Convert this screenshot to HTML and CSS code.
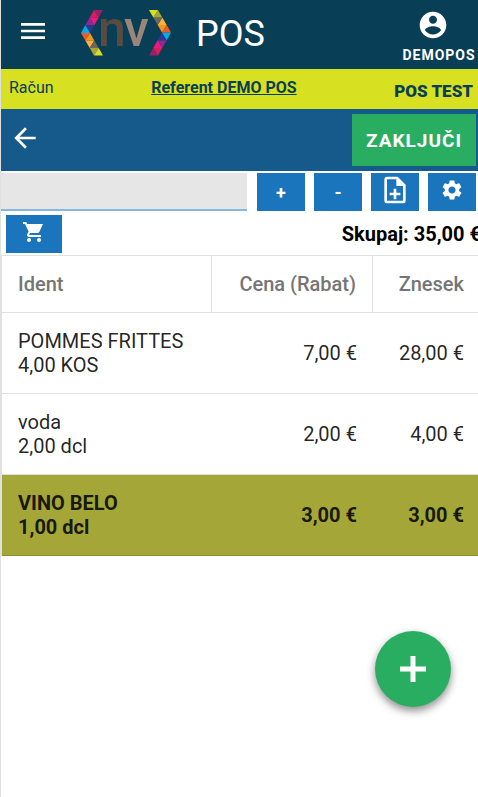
FILE: index.html
```html
<!DOCTYPE html>
<html lang="sl">
<head>
    <meta charset="UTF-8">
    <meta name="viewport" content="width=device-width, initial-scale=1.0">
    <title>POS</title>
    <link rel="stylesheet" href="styles.css">
</head>
<body>

    <header class="app-bar">
        <button type="button" class="menu" aria-label="Meni">
            <svg width="32" height="32" viewBox="0 0 24 24" fill="currentColor"><path d="M3 18h18v-2H3v2zm0-5h18v-2H3v2zm0-7v2h18V6H3z"/></svg>
        </button>
        <svg class="logo" width="90" height="46" viewBox="0 0 90 46" role="img" aria-label="nv">
            <g id="chevron">
                <path fill="#9e1f63" d="M13 0h9l-4.300 7.600z"/>
                <path fill="#da1c5c" d="M13 0l4.700 7.600h-9z"/>
                <path fill="#ec1a80" d="M8.700 7.600h9l-4.400 7.700z"/>
                <path fill="#92278f" d="M8.700 7.600l4.600 7.700h-9z"/>
                <path fill="#2b3990" d="M4.300 15.300h9L9 23z"/>
                <path fill="#00aeef" d="M4.300 15.300L9 23H0z"/>
                <path fill="#f15a29" d="M0 23h9l-4.700 7.600z"/>
                <path fill="#f7941e" d="M9 23l4.300 7.600h-9z"/>
                <path fill="#fbb040" d="M4.300 30.600h9L8.700 38z"/>
                <path fill="#726658" d="M13.300 30.600l4.400 7.400h-9z"/>
                <path fill="#a4a635" d="M8.700 38h9L13 45.500z"/>
                <path fill="#d7df23" d="M17.700 38l4.300 7.500h-9z"/>
            </g>
            <use href="#chevron" transform="rotate(180 45 22.750)"/>
            <text class="logo-n" x="17" y="36">n</text>
            <text class="logo-v" x="43" y="36">v</text>
        </svg>
        <h1>POS</h1>
        <button type="button" class="account">
            <svg width="32" height="32" viewBox="0 0 24 24" fill="currentColor"><path d="M12 2C6.480 2 2 6.480 2 12s4.480 10 10 10 10-4.480 10-10S17.520 2 12 2zm0 3c1.660 0 3 1.340 3 3s-1.340 3-3 3-3-1.340-3-3 1.340-3 3-3zm0 14.200c-2.500 0-4.710-1.280-6-3.220.030-1.990 4-3.080 6-3.080 1.990 0 5.970 1.090 6 3.080-1.290 1.940-3.500 3.220-6 3.220z"/></svg>
            <span>DEMOPOS</span>
        </button>
    </header>

    <div class="info-bar">
        <span>Račun</span>
        <a href="#">Referent DEMO POS</a>
        <strong>POS TEST</strong>
    </div>

    <nav class="action-bar">
        <button type="button" class="back" aria-label="Nazaj">
            <svg width="32" height="32" viewBox="0 0 24 24" fill="currentColor"><path d="M20 11H7.830l5.590-5.590L12 4l-8 8 8 8 1.410-1.410L7.830 13H20v-2z"/></svg>
        </button>
        <button type="button" class="finish">ZAKLJUČI</button>
    </nav>

    <main>
        <div class="entry">
            <input type="text" class="search" aria-label="Ident">
            <button type="button" class="tool">+</button>
            <button type="button" class="tool">-</button>
            <button type="button" class="tool" aria-label="Nov dokument">
                <svg width="32" height="32" viewBox="0 0 24 24" fill="currentColor"><path fill-rule="evenodd" d="M14 2H6c-1.100 0-2 .9-2 2v16c0 1.100.9 2 2 2h12c1.100 0 2-.9 2-2V8l-6-6zm4 18H6V4h7v5h5v11zM11 11h2v3h3v2h-3v3h-2v-3H8v-2h3z"/></svg>
            </button>
            <button type="button" class="tool" aria-label="Nastavitve">
                <svg width="24" height="24" viewBox="0 0 24 24" fill="currentColor"><path d="M19.140 12.940c.040-.3.060-.610.060-.940 0-.320-.020-.640-.070-.940l2.030-1.580c.180-.140.230-.410.120-.610l-1.920-3.320c-.120-.220-.370-.290-.590-.220l-2.390.960c-.5-.380-1.030-.7-1.620-.940l-.360-2.540c-.040-.240-.240-.410-.480-.410h-3.840c-.240 0-.430.170-.470.410l-.360 2.540c-.590.240-1.130.570-1.620.940l-2.390-.960c-.220-.080-.470 0-.590.220L2.740 8.870c-.120.210-.080.470.120.610l2.030 1.580c-.050.3-.090.630-.090.940s.020.640.070.940l-2.030 1.580c-.180.140-.230.410-.120.610l1.920 3.320c.120.220.370.290.590.220l2.390-.960c.5.380 1.030.7 1.620.940l.360 2.540c.050.240.240.410.480.410h3.840c.240 0 .440-.170.470-.410l.360-2.540c.590-.240 1.130-.560 1.620-.940l2.390.960c.220.080.470 0 .590-.220l1.920-3.320c.120-.220.070-.470-.120-.610l-2.010-1.580zM12 15.600c-1.980 0-3.600-1.620-3.600-3.600s1.620-3.600 3.600-3.600 3.600 1.620 3.600 3.600-1.620 3.600-3.600 3.600z"/></svg>
            </button>
        </div>

        <div class="summary">
            <button type="button" class="tool cart" aria-label="Košarica">
                <svg width="24" height="24" viewBox="0 0 24 24" fill="currentColor"><path d="M7 18c-1.100 0-1.990.9-1.990 2S5.900 22 7 22s2-.9 2-2-.9-2-2-2zM1 2v2h2l3.600 7.590-1.350 2.450c-.160.280-.250.610-.250.960 0 1.100.9 2 2 2h12v-2H7.420c-.140 0-.250-.110-.250-.250l.030-.120.900-1.630h7.450c.750 0 1.410-.410 1.750-1.030L21 4H5.210l-.940-2H1zm16 16c-1.100 0-1.990.9-1.990 2s.890 2 1.990 2 2-.9 2-2-.9-2-2-2z"/></svg>
            </button>
            <span class="total">Skupaj: 35,00 €</span>
        </div>

        <table class="items">
            <thead>
                <tr>
                    <th>Ident</th>
                    <th class="price">Cena (Rabat)</th>
                    <th class="amount">Znesek</th>
                </tr>
            </thead>
            <tbody>
                <tr>
                    <td>POMMES FRITTES<br>4,00 KOS</td>
                    <td class="price">7,00 €</td>
                    <td class="amount">28,00 €</td>
                </tr>
                <tr>
                    <td>voda<br>2,00 dcl</td>
                    <td class="price">2,00 €</td>
                    <td class="amount">4,00 €</td>
                </tr>
                <tr class="selected">
                    <td>VINO BELO<br>1,00 dcl</td>
                    <td class="price">3,00 €</td>
                    <td class="amount">3,00 €</td>
                </tr>
            </tbody>
        </table>
    </main>

    <button type="button" class="fab" aria-label="Dodaj">
        <svg width="26" height="26" viewBox="0 0 26 26" fill="currentColor"><path d="M10.500 0h5v10.500H26v5H15.500V26h-5V15.500H0v-5h10.500z"/></svg>
    </button>

</body>
</html>
```
FILE: styles.css
```css
* {
    box-sizing: border-box;
}
body {
    margin: 0;
    min-height: 100vh;
    border-left: 1px solid #e0e0e0;
    background-color: #fff;
    font-family: Roboto, sans-serif;
    font-size: 16px;
    overflow-x: hidden;
}
button {
    display: flex;
    align-items: center;
    justify-content: center;
    padding: 0;
    border: none;
    background: none;
    color: #fff;
    font-family: inherit;
    cursor: pointer;
}
svg {
    display: block;
    flex: none;
}

/* top bar */
.app-bar {
    display: flex;
    align-items: flex-start;
    height: 69px;
    padding: 0 2px 0 16px;
    background-color: #093f56;
    color: #fff;
}
.menu {
    margin-top: 15px;
}
.logo {
    margin: 10px 0 0 32px;
    overflow: visible;
}
.logo-n,
.logo-v {
    font-size: 50px;
    font-weight: 500;
    fill: #594a42;
}
.logo-v {
    fill: #9b8579;
}
h1 {
    margin: 13px 0 0 25px;
    font-size: 36px;
    font-weight: 400;
    line-height: 42px;
}
.account {
    flex-direction: column;
    align-items: center;
    gap: 6px;
    width: 74px;
    margin: 9px 0 0 auto;
    font-size: 14px;
    font-weight: 700;
    line-height: 16px;
    letter-spacing: 1px;
}
.account svg {
    margin-right: 12px;
}

.info-bar {
    display: flex;
    align-items: flex-start;
    justify-content: space-between;
    height: 40px;
    padding: 9px 5px 0 8px;
    background-color: #d7e021;
    color: #093f56;
    line-height: 20px;
}
.info-bar a {
    color: inherit;
    font-weight: 700;
}
.info-bar strong {
    margin-top: 3px;
    font-size: 17px;
    font-weight: 900;
}

.action-bar {
    display: flex;
    align-items: center;
    justify-content: space-between;
    height: 62px;
    padding: 0 2px 0 8px;
    background-color: #16598b;
}
.back {
    margin-bottom: 4px;
}
.finish {
    height: 52px;
    padding: 0 14px;
    background-color: #29ae61;
    font-size: 19px;
    font-weight: 700;
    letter-spacing: 1px;
}

/* entry row */
.entry {
    display: flex;
    gap: 9px;
    padding: 2px 2px 0 0;
}
.search {
    flex: 1;
    min-width: 0;
    height: 38px;
    margin-right: 1px;
    padding: 0 8px;
    border: none;
    border-bottom: 2px solid #88b7e0;
    background-color: #e6e6e6;
    font: inherit;
}
.tool {
    flex: none;
    width: 48px;
    height: 38px;
    background-color: #1b75bc;
    font-size: 18px;
    font-weight: 700;
}
.tool svg {
    margin-bottom: 4px;
}
.summary {
    display: flex;
    justify-content: space-between;
    padding: 4px 0 2px 5px;
}
.cart {
    width: 56px;
}
.total {
    margin-right: -3px;
    color: #000;
    font-size: 20px;
    font-weight: 700;
    line-height: 38px;
    white-space: nowrap;
}

.items {
    width: 100%;
    border-collapse: separate;
    border-spacing: 0;
    border-top: 1px solid #e0e0e0;
    border-left: 1px solid #e0e0e0;
    color: rgba(0, 0, 0, 0.87);
    font-size: 20px;
    line-height: 24px;
}
.items th,
.items td {
    padding: 16px;
    border-bottom: 1px solid #e0e0e0;
    text-align: left;
}
.items th {
    border-right: 1px solid #e0e0e0;
    color: #757575;
    font-weight: 500;
}
.items th.amount {
    border-right: none;
}
.items .price {
    width: 161px;
    text-align: right;
}
.items .amount {
    width: 105px;
    padding-right: 14px;
    text-align: right;
}
.items .selected td {
    border-bottom-color: #8c8e2d;
    background-color: #a4a637;
    font-weight: 700;
}

.fab {
    position: fixed;
    right: 27px;
    bottom: 90px;
    width: 76px;
    height: 76px;
    border-radius: 50%;
    background-color: #29ae61;
    box-shadow: 0 4px 8px rgba(0, 0, 0, 0.45);
}
```
